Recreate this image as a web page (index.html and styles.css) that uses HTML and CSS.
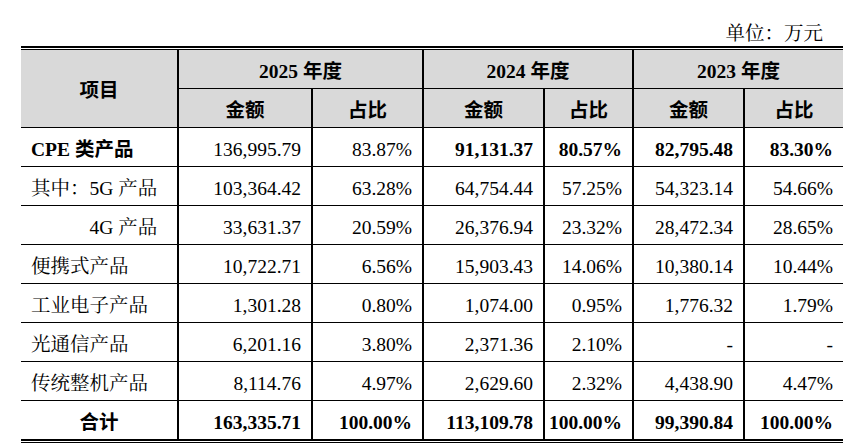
FILE: index.html
```html
<!DOCTYPE html>
<html lang="zh-CN">
<head>
<meta charset="utf-8">
<title>收入构成</title>
<link rel="stylesheet" href="styles.css">
</head>
<body>
<div class="page">
  <div class="unit">单位：万元</div>
  <div class="frame">
    <table class="data">
      <colgroup>
        <col class="c-item">
        <col class="c-amt1">
        <col class="c-pct1">
        <col class="c-amt2">
        <col class="c-pct2">
        <col class="c-amt3">
        <col class="c-pct3">
      </colgroup>
      <thead>
        <tr>
          <th rowspan="2" class="first">项目</th>
          <th colspan="2" class="vl">2025 年度</th>
          <th colspan="2" class="vl">2024 年度</th>
          <th colspan="2" class="vl">2023 年度</th>
        </tr>
        <tr>
          <th class="vl">金额</th>
          <th class="vl">占比</th>
          <th class="vl">金额</th>
          <th class="vl">占比</th>
          <th class="vl">金额</th>
          <th class="vl">占比</th>
        </tr>
      </thead>
      <tbody>
        <tr>
          <td class="name bold">CPE 类产品</td>
          <td class="num">136,995.79</td>
          <td class="num">83.87%</td>
          <td class="num bold">91,131.37</td>
          <td class="num bold">80.57%</td>
          <td class="num bold">82,795.48</td>
          <td class="num bold">83.30%</td>
        </tr>
        <tr>
          <td class="name">其中：5G 产品</td>
          <td class="num">103,364.42</td>
          <td class="num">63.28%</td>
          <td class="num">64,754.44</td>
          <td class="num">57.25%</td>
          <td class="num">54,323.14</td>
          <td class="num">54.66%</td>
        </tr>
        <tr>
          <td class="name sub">4G 产品</td>
          <td class="num">33,631.37</td>
          <td class="num">20.59%</td>
          <td class="num">26,376.94</td>
          <td class="num">23.32%</td>
          <td class="num">28,472.34</td>
          <td class="num">28.65%</td>
        </tr>
        <tr>
          <td class="name">便携式产品</td>
          <td class="num">10,722.71</td>
          <td class="num">6.56%</td>
          <td class="num">15,903.43</td>
          <td class="num">14.06%</td>
          <td class="num">10,380.14</td>
          <td class="num">10.44%</td>
        </tr>
        <tr>
          <td class="name">工业电子产品</td>
          <td class="num">1,301.28</td>
          <td class="num">0.80%</td>
          <td class="num">1,074.00</td>
          <td class="num">0.95%</td>
          <td class="num">1,776.32</td>
          <td class="num">1.79%</td>
        </tr>
        <tr>
          <td class="name">光通信产品</td>
          <td class="num">6,201.16</td>
          <td class="num">3.80%</td>
          <td class="num">2,371.36</td>
          <td class="num">2.10%</td>
          <td class="num">-</td>
          <td class="num">-</td>
        </tr>
        <tr>
          <td class="name">传统整机产品</td>
          <td class="num">8,114.76</td>
          <td class="num">4.97%</td>
          <td class="num">2,629.60</td>
          <td class="num">2.32%</td>
          <td class="num">4,438.90</td>
          <td class="num">4.47%</td>
        </tr>
        <tr class="total">
          <td class="name bold center">合计</td>
          <td class="num bold">163,335.71</td>
          <td class="num bold">100.00%</td>
          <td class="num bold">113,109.78</td>
          <td class="num bold">100.00%</td>
          <td class="num bold">99,390.84</td>
          <td class="num bold">100.00%</td>
        </tr>
      </tbody>
    </table>
  </div>
</div>
</body>
</html>
```

FILE: styles.css
```css
html, body {
  margin: 0;
  padding: 0;
  background: #ffffff;
}

body {
  font-family: "Liberation Serif", "Noto Serif CJK SC", "Noto Sans CJK SC", serif;
  font-size: 19.5px;
  color: #000000;
}

.page {
  width: 822px;
  padding-left: 21px;
}

.unit {
  height: 46px;
  box-sizing: border-box;
  padding-top: 22px;
  padding-right: 20px;
  line-height: 23px;
  text-align: right;
}

.frame {
  border-top: 2px solid #000;
  padding-top: 1px;
  padding-bottom: 1px;
  border-bottom: 1px solid #000;
}

.data {
  width: 822px;
  table-layout: fixed;
  border-collapse: separate;
  border-spacing: 0;
  border-top: 1px solid #000;
}

.c-item { width: 156px; }
.c-amt1 { width: 134px; }
.c-pct1 { width: 111px; }
.c-amt2 { width: 121px; }
.c-pct2 { width: 89px; }
.c-amt3 { width: 111px; }
.c-pct3 { width: 100px; }

.data th,
.data td {
  height: 39px;
  padding: 5px 0 0 0;
  box-sizing: border-box;
  border-bottom: 1px solid #000;
  vertical-align: middle;
  white-space: nowrap;
  overflow: visible;
  line-height: 22px;
}

.data th {
  background: #d9d9d9;
  font-family: "Liberation Serif", "Noto Sans CJK SC", sans-serif;
  font-weight: bold;
  text-align: center;
}

.data td + td,
.data th.vl {
  border-left: 2px solid #000;
}

.name {
  text-align: left;
  padding-left: 10px !important;
}

.name.sub {
  padding-left: calc(10px + 3em) !important;
}

.center {
  text-align: center;
  padding-left: 0 !important;
}

.num {
  text-align: right;
  padding-right: 10px !important;
}

.bold {
  font-weight: bold;
  font-family: "Liberation Serif", "Noto Sans CJK SC", sans-serif;
}

.total td {
  height: 40px;
  border-bottom: 2px solid #000;
}
```
